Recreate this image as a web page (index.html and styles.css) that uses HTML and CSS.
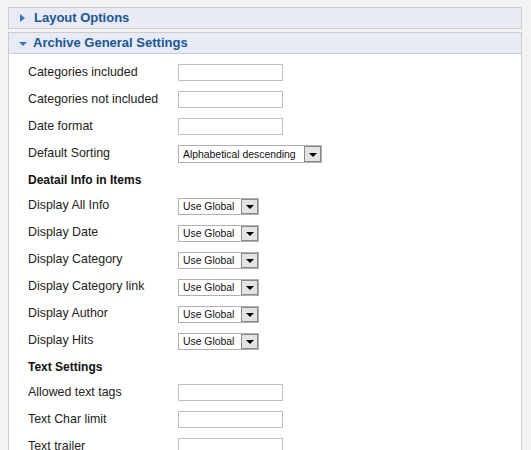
FILE: index.html
```html
<!DOCTYPE html>
<html>
<head>
<meta charset="utf-8">
<link rel="stylesheet" href="styles.css">
</head>
<body>
<div class="panel">
  <div class="panel-head">
    <svg class="arrow-right" width="5" height="8" viewBox="0 0 5 8"><polygon points="0,0 5,4 0,8" fill="#2f7ac2"/></svg>
    <span>Layout Options</span>
  </div>
</div>
<div class="panel open">
  <div class="panel-head">
    <svg class="arrow-down" width="8" height="4" viewBox="0 0 8 4"><polygon points="0,0 8,0 4,4" fill="#2f7ac2"/></svg>
    <span>Archive General Settings</span>
  </div>
  <div class="panel-body">
    <div class="row"><label class="lbl">Categories included</label><span class="input"></span></div>
    <div class="row"><label class="lbl">Categories not included</label><span class="input"></span></div>
    <div class="row"><label class="lbl">Date format</label><span class="input"></span></div>
    <div class="row"><label class="lbl">Default Sorting</label>
      <span class="select wide"><span class="select-text">Alphabetical descending</span><span class="select-btn"><span class="tri"></span></span></span></div>
    <div class="row head-row"><span class="heading">Deatail Info in Items</span></div>
    <div class="row"><label class="lbl">Display All Info</label>
      <span class="select"><span class="select-text">Use Global</span><span class="select-btn"><span class="tri"></span></span></span></div>
    <div class="row"><label class="lbl">Display Date</label>
      <span class="select"><span class="select-text">Use Global</span><span class="select-btn"><span class="tri"></span></span></span></div>
    <div class="row"><label class="lbl">Display Category</label>
      <span class="select"><span class="select-text">Use Global</span><span class="select-btn"><span class="tri"></span></span></span></div>
    <div class="row"><label class="lbl">Display Category link</label>
      <span class="select"><span class="select-text">Use Global</span><span class="select-btn"><span class="tri"></span></span></span></div>
    <div class="row"><label class="lbl">Display Author</label>
      <span class="select"><span class="select-text">Use Global</span><span class="select-btn"><span class="tri"></span></span></span></div>
    <div class="row"><label class="lbl">Display Hits</label>
      <span class="select"><span class="select-text">Use Global</span><span class="select-btn"><span class="tri"></span></span></span></div>
    <div class="row head-row"><span class="heading">Text Settings</span></div>
    <div class="row"><label class="lbl">Allowed text tags</label><span class="input"></span></div>
    <div class="row"><label class="lbl">Text Char limit</label><span class="input"></span></div>
    <div class="row"><label class="lbl">Text trailer</label><span class="input"></span></div>
  </div>
</div>
</body>
</html>
```

FILE: styles.css
```css
html, body {
  background: #f3f3f3;
}
body {
  margin: 7px 9px 0 8px;
  font-family: "Liberation Sans", Arial, sans-serif;
  color: #222;
}
.panel {
  margin-bottom: 3px;
}
.panel-head {
  display: flex;
  align-items: center;
  height: 20px;
  border: 1px solid #cccccc;
  background: #e8eaf5;
  font-size: 13px;
  font-weight: bold;
  line-height: 20px;
  color: #1a5793;
}
.arrow-right {
  margin-left: 11px;
  margin-right: 9px;
  margin-top: -1px;
}
.arrow-down {
  margin-left: 10px;
  margin-right: 6px;
  margin-top: 1px;
}
.panel-body {
  background: #fff;
  border-left: 1px solid #cccccc;
  border-right: 1px solid #cccccc;
  padding: 5px 0 20px 19px;
}
.row {
  display: flex;
  align-items: flex-start;
  height: 27px;
}
.row.head-row {
  height: 25px;
}
.lbl {
  width: 150px;
  font-size: 12.4px;
  line-height: 27px;
  color: #222;
}
.heading {
  font-size: 12px;
  font-weight: bold;
  line-height: 27px;
  color: #111;
}
.input {
  margin-top: 5px;
  width: 105px;
  height: 17px;
  box-sizing: border-box;
  border: 1px solid #c0c0c0;
  background: #fff;
}
.select {
  margin-top: 6px;
  display: flex;
  align-items: center;
  width: 81px;
  height: 17px;
  box-sizing: border-box;
  border: 1px solid #b0b0b0;
  background: #fff;
  padding-left: 4px;
  font-size: 10.4px;
  color: #111;
}
.select.wide {
  margin-top: 5px;
  width: 144px;
  height: 18px;
}
.select-text {
  flex: 1;
  white-space: nowrap;
  overflow: hidden;
}
.select-btn {
  display: flex;
  align-items: flex-end;
  justify-content: center;
  width: 17px;
  height: 100%;
  box-sizing: border-box;
  border: 1px solid #8a8a8a;
  background: #e3e3e3;
  padding-bottom: 4px;
}
.tri {
  width: 0;
  height: 0;
  border-left: 4px solid transparent;
  border-right: 4px solid transparent;
  border-top: 4px solid #000;
}
```
